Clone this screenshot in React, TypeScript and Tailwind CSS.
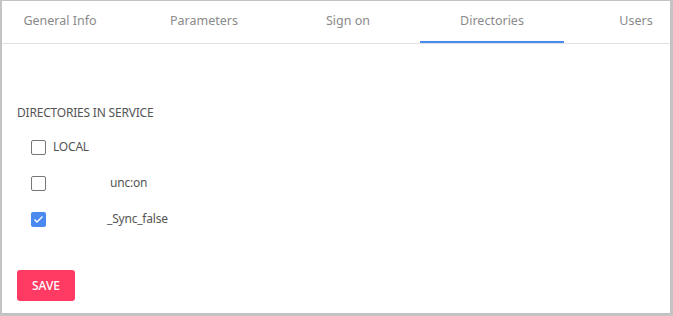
import { useState } from 'react';

const tabs = ['General Info', 'Parameters', 'Sign on', 'Directories', 'Users'];

interface DirectoryItem {
  hidden: number;
  label: string;
  checked: boolean;
}

const directories: DirectoryItem[] = [
  { hidden: 0, label: 'LOCAL', checked: false },
  { hidden: 57, label: 'unc:on', checked: false },
  { hidden: 54, label: '_Sync_false', checked: true },
];

export default function App() {
  const [active, setActive] = useState(3);
  const [items, setItems] = useState(directories);

  const toggle = (index: number) => {
    setItems(items.map((item, i) => (i === index ? { ...item, checked: !item.checked } : item)));
  };

  return (
    <div
      className="w-[673px] h-[316px] bg-white border-t border-l-2 border-r-[3px] border-b-[3px] border-[#c3c3c3] overflow-hidden"
      style={{ fontFamily: '"Noto Sans", "Open Sans", sans-serif' }}
    >
      {/* Tabs */}
      <div className="flex border-b border-[#e2e2e2] h-[43px] -ml-[14px]">
        {tabs.map((tab, i) => (
          <button
            key={tab}
            onClick={() => setActive(i)}
            className={`w-[144px] shrink-0 h-full text-[12.5px] text-[#8a8a8a] pt-px border-b-2 ${
              active === i ? 'border-[#4a8af0]' : 'border-transparent'
            }`}
          >
            {tab}
          </button>
        ))}
      </div>

      <div className="pl-[15px] pt-[61px]">
        <p className="text-[12px] text-[#555] leading-[16px] tracking-[-0.2px]">DIRECTORIES IN SERVICE</p>

        <div className="mt-[18px] pl-[14px] flex flex-col gap-[20px]">
          {items.map((item, i) => (
            <label key={i} className="flex items-center h-[16px] cursor-pointer">
              {item.checked ? (
                <span
                  onClick={() => toggle(i)}
                  className="w-[15px] h-[15px] rounded-[2px] bg-[#4a8af0] flex items-center justify-center"
                >
                  <svg width="11" height="9" viewBox="0 0 11 9" fill="none">
                    <path d="M1.5 4.5L4 7L9.5 1.5" stroke="white" strokeWidth="1.4" />
                  </svg>
                </span>
              ) : (
                <span
                  onClick={() => toggle(i)}
                  className="w-[15px] h-[15px] rounded-[2px] border-[1.5px] border-[#777] bg-white"
                />
              )}
              <span className="ml-[7px] text-[12px] text-[#555] tracking-[-0.2px] flex items-center">
                {item.hidden > 0 && <span className="inline-block h-[14px] bg-white" style={{ width: item.hidden }} />}
                {item.label}
              </span>
            </label>
          ))}
        </div>

        <button className="mt-[43px] w-[58px] h-[31px] rounded-[3px] bg-[#ff3b64] text-white text-[12px] font-medium">
          SAVE
        </button>
      </div>
    </div>
  );
}
